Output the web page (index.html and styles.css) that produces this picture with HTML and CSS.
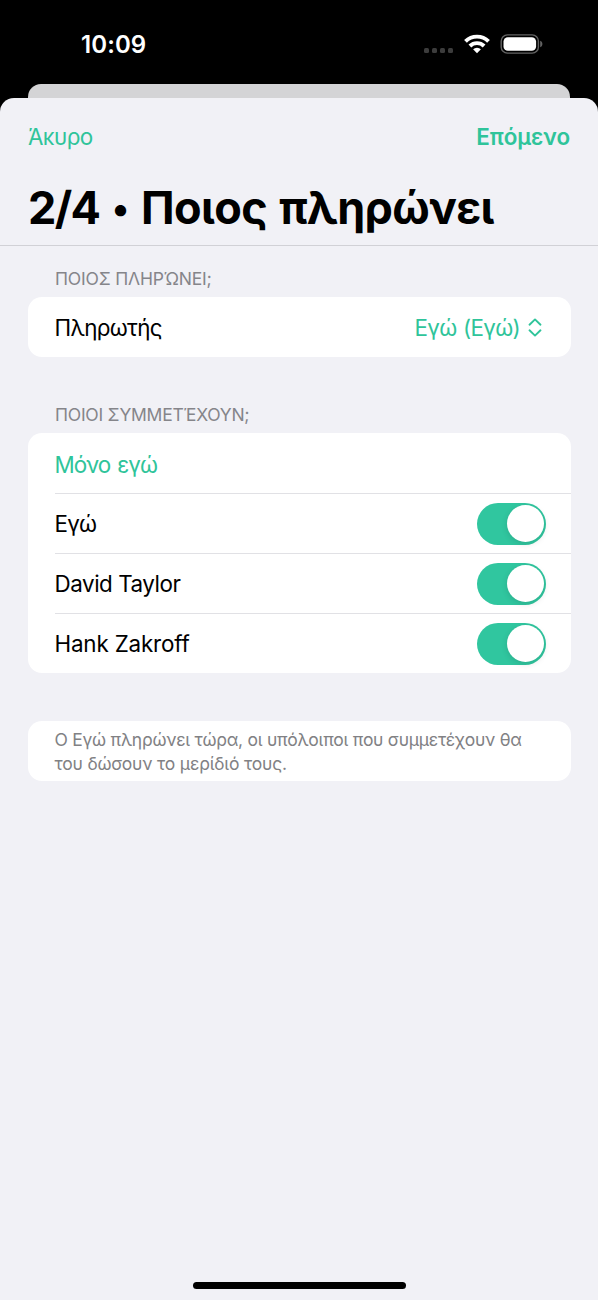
FILE: index.html
```html
<!DOCTYPE html>
<html lang="el">
<head>
<meta charset="utf-8">
<title>Ποιος πληρώνει</title>
<link rel="stylesheet" href="styles.css">
</head>
<body>
<div class="phone">
  <header class="status">
    <span class="time">10:09</span>
    <div class="indicators">
      <span class="dots"><i></i><i></i><i></i><i></i></span>
      <svg class="wifi" width="26" height="20" viewBox="0 0 26 20">
        <g fill="none" stroke="#fff" stroke-width="3.9">
          <path d="M1.500 7.400a16.300 16.300 0 0 1 23 0"/>
          <path d="M5.900 12a10.100 10.100 0 0 1 14.200 0"/>
        </g>
        <path d="M13 19.300l-3.900-4a5.700 5.700 0 0 1 7.800 0z" fill="#fff"/>
      </svg>
      <svg class="battery" width="43" height="20" viewBox="0 0 43 20">
        <rect x="1.2" y=".9" width="37.2" height="18.2" rx="6.2" fill="none" stroke="#636363" stroke-width="1.4"/>
        <rect x="3.500" y="3.200" width="32.600" height="13.600" rx="4.400" fill="#fff"/>
        <path d="M40.200 6.800c1.400.6 2.200 1.800 2.200 3.200s-.8 2.600-2.200 3.200z" fill="#636363"/>
      </svg>
    </div>
  </header>
  <div class="back-sheet"></div>
  <main class="sheet">
    <nav class="nav">
      <span class="cancel">Άκυρο</span>
      <span class="next">Επόμενο</span>
    </nav>
    <h1 class="title"><span class="step">2/4</span> <span class="bullet">•</span> <span class="heading">Ποιος πληρώνει</span></h1>
    <h2 class="label"><span class="label-payer">ΠΟΙΟΣ ΠΛΗΡΏΝΕΙ;</span></h2>
    <section class="card">
      <div class="row payer-row">
        <span class="payer">Πληρωτής</span>
        <span class="picker"><span class="value">Εγώ (Εγώ)</span>
          <svg width="14" height="19" viewBox="0 0 14 19" fill="none" stroke="#2fc49a" stroke-width="1.9" stroke-linecap="round" stroke-linejoin="round"><path d="M1.500 6.700L7 1.400l5.500 5.300M1.500 12.300L7 17.600l5.500-5.300"/></svg>
        </span>
      </div>
    </section>
    <h2 class="label second"><span class="label-members">ΠΟΙΟΙ ΣΥΜΜΕΤΈΧΟΥΝ;</span></h2>
    <section class="card">
      <div class="row first"><span class="only-me">Μόνο εγώ</span></div>
      <div class="row lined"><span class="me">Εγώ</span><span class="toggle"><i></i></span></div>
      <div class="row lined"><span class="david">David Taylor</span><span class="toggle"><i></i></span></div>
      <div class="row lined"><span class="hank">Hank Zakroff</span><span class="toggle"><i></i></span></div>
    </section>
    <section class="card note">
      <p><span class="note-a">Ο Εγώ πληρώνει τώρα, οι υπόλοιποι που συμμετέχουν θα</span><br><span class="note-b">του δώσουν το μερίδιό τους.</span></p>
    </section>
    <div class="home"></div>
  </main>
</div>
</body>
</html>
```
FILE: styles.css
```css
* { box-sizing: border-box; }
body {
  margin: 0;
  background: #000;
  font-family: Inter, "Liberation Sans", sans-serif;
  font-size: 22.400px;
  color: #000;
}
.phone { width: 598px; height: 1300px; display: flex; flex-direction: column; overflow: hidden; }
.status { height: 84px; padding: 0 55px 0 81px; display: flex; justify-content: space-between; align-items: flex-start; color: #fff; }
.time { margin-top: 31px; line-height: 28px; font-size: 24px; font-weight: 600; letter-spacing: .1px; }
.indicators { display: flex; align-items: flex-start; padding-top: 34px; }
.dots { display: flex; gap: 3px; padding-top: 14px; margin-right: 11px; }
.dots i { width: 5px; height: 5px; border-radius: 1.5px; background: #3c3c3c; }
.battery { margin-left: 10px; }
.back-sheet { height: 14px; margin: 0 28px; border-radius: 13px 13px 0 0; background: #d4d4d6; }
.sheet { flex: 1; display: flex; flex-direction: column; background: #f1f1f6; border-radius: 14px 14px 0 0; }
.nav { height: 78px; padding: 0 28px 2px; display: flex; justify-content: space-between; align-items: center; color: #2fc49a; }
.cancel { letter-spacing: -.6px; }
.next { font-weight: 600; letter-spacing: -.03px; }
.title { margin: 0; height: 70px; padding: 2px 28px 0; display: flex; align-items: flex-start; border-bottom: 1.4px solid #d1d1d6; font-size: 45px; line-height: 60px; font-weight: 700; white-space: nowrap; }
.step { width: 84px; letter-spacing: -1.6px; }
.bullet { width: 29px; font-size: 36px; line-height: 61px; }
.heading { letter-spacing: -.64px; word-spacing: 2px; }
.label { margin: 0; height: 51px; padding: 21px 55px 0; font-size: 17.500px; line-height: 24px; font-weight: 400; color: #85858a; white-space: nowrap; }
.label.second { height: 76px; padding-top: 46px; }
.label-payer { letter-spacing: -.2px; }
.label-members { letter-spacing: -.25px; }
.card { margin: 0 27.500px; border-radius: 14px; background: #fff; }
.row { height: 60px; margin-left: 27px; padding-right: 24.500px; display: flex; align-items: center; justify-content: space-between; white-space: nowrap; }
.payer-row { padding-top: 1px; }
.first { padding-top: 3px; }
.lined { border-top: 1.4px solid #e1e1e5; }
.picker { display: flex; align-items: center; gap: 8px; padding-right: 4px; color: #2fc49a; }
.picker svg { margin-top: -1px; }
.payer { letter-spacing: -.68px; }
.value { letter-spacing: -.7px; word-spacing: 1px; }
.only-me { color: #2fc49a; letter-spacing: -.9px; word-spacing: 1.500px; }
.me { letter-spacing: -.8px; }
.david { letter-spacing: -.45px; }
.hank { letter-spacing: -.18px; }
.toggle { width: 69.500px; height: 42px; padding: 2.500px; display: flex; justify-content: flex-end; border-radius: 21px; background: #30c69f; }
.toggle i { width: 37px; height: 37px; border-radius: 50%; background: #fff; box-shadow: 0 2px 6px rgba(0, 0, 0, .12); }
.note { height: 60px; margin-top: 48px; padding: 7px 27px; font-size: 17.500px; line-height: 24px; color: #818184; white-space: nowrap; }
.note p { margin: 0; }
.note-a { letter-spacing: -.265px; }
.note-b { letter-spacing: -.18px; }
.home { width: 213px; height: 7px; margin: auto auto 11px; border-radius: 4px; background: #000; }
```
